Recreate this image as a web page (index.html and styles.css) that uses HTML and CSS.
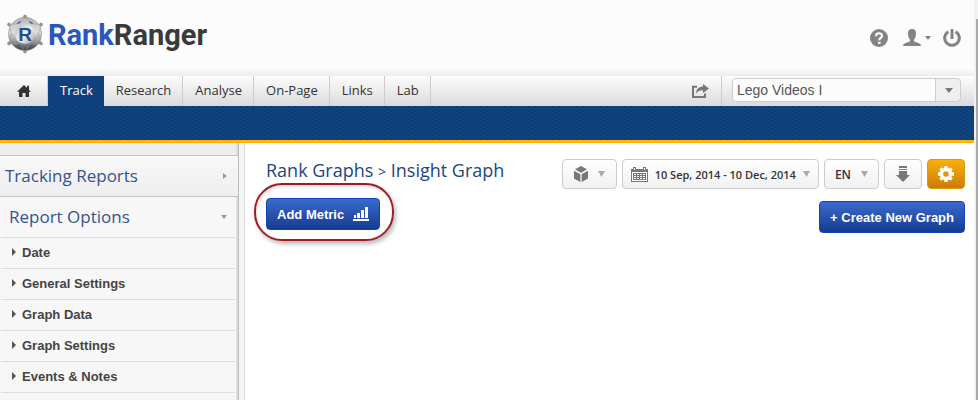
FILE: index.html
```html
<!DOCTYPE html>
<html lang="en">
<head>
<meta charset="utf-8">
<title>RankRanger - Insight Graph</title>
<link rel="stylesheet" href="styles.css">
</head>
<body>
<div class="page">
  <header class="header">
    <a class="logo" href="#">
      <svg class="badge" viewBox="0 0 36 40" aria-hidden="true">
        <defs>
          <linearGradient id="metal" x1="0" y1="0" x2="0" y2="1">
            <stop offset="0" stop-color="#b4b4b4"/>
            <stop offset=".45" stop-color="#dedede"/>
            <stop offset=".7" stop-color="#999"/>
            <stop offset="1" stop-color="#3a3a3a"/>
          </linearGradient>
          <linearGradient id="plate" x1="0" y1="0" x2="1" y2="1">
            <stop offset="0" stop-color="#b4b4b4"/>
            <stop offset=".5" stop-color="#f2f2f2"/>
            <stop offset="1" stop-color="#a0a0a0"/>
          </linearGradient>
        </defs>
        <circle cx="18" cy="20" r="16.500" fill="url(#metal)" stroke="#888" stroke-width=".6"/>
        <circle cx="18" cy="20" r="13.500" fill="#234f91"/>
        <path d="M18 2 23.500 9.500 34 10.500 31.500 20 34 29.500 23.500 30.500 18 38 12.500 30.500 2 29.500 4.500 20 2 10.500 12.500 9.500Z" fill="url(#metal)" stroke="#999" stroke-width=".5"/>
        <g fill="#999" stroke="#777" stroke-width=".5">
          <circle cx="18" cy="2.500" r="1.500"/><circle cx="34" cy="10.500" r="1.500"/><circle cx="34" cy="29.500" r="1.500"/>
          <circle cx="18" cy="37.500" r="1.500"/><circle cx="2" cy="29.500" r="1.500"/><circle cx="2" cy="10.500" r="1.500"/>
        </g>
        <circle cx="18" cy="20" r="10" fill="url(#plate)"/>
        <text class="badge-letter" x="18" y="27" text-anchor="middle">R</text>
      </svg>
      <span class="wordmark"><span class="rank">Rank</span>Ranger</span>
    </a>
    <div class="tools">
      <button class="tool" aria-label="Help">
        <svg width="18" height="18" viewBox="0 0 18 18"><circle cx="9" cy="9" r="9" fill="#848484"/><path d="M6 7.200C6 3.300 12 3.400 12 6.900 12 8.900 9.200 8.900 9.200 11.200" fill="none" stroke="#fff" stroke-width="2.200"/><path d="M8 12.700h2.500v2.300H8z" fill="#fff"/></svg>
      </button>
      <button class="tool account" aria-label="Account">
        <svg width="18" height="18" viewBox="0 0 18 18"><path d="M9 0c3 0 4.300 2.200 4 5-.2 2.800-1 4.600-2 5.600v1.600c2 1.200 7 1.600 7 4.800H0c0-3.200 5-3.600 7-4.800v-1.600C6 9.600 5.200 7.800 5 5 4.700 2.200 6 0 9 0Z" fill="#848484"/></svg>
        <svg width="6" height="4" viewBox="0 0 6 4"><path d="M0 0h6L3 4Z" fill="#848484"/></svg>
      </button>
      <button class="tool" aria-label="Log out">
        <svg width="18" height="18" viewBox="0 0 18 18"><path d="M5.300 2.700A7.300 7.300 0 1 0 12.700 2.700" fill="none" stroke="#848484" stroke-width="3"/><path d="M7.500 0h3v10h-3z" fill="#848484"/></svg>
      </button>
    </div>
  </header>

  <nav class="nav">
    <a class="tab home" href="#" aria-label="Home">
      <svg width="14" height="12" viewBox="0 0 14 12"><path d="M7 0 14 6.800H12V12H8.500V8h-3v4H2V6.800H0Z" fill="#333"/><path d="M10 .8h2V5h-2z" fill="#333"/></svg>
    </a>
    <a class="tab active" href="#">Track</a>
    <a class="tab" href="#">Research</a>
    <a class="tab" href="#">Analyse</a>
    <a class="tab" href="#">On-Page</a>
    <a class="tab" href="#">Links</a>
    <a class="tab" href="#">Lab</a>
    <button class="share" aria-label="Share">
      <svg width="17" height="14" viewBox="0 0 17 14"><path d="M5 2.800H1v10.200h12V9.500" fill="none" stroke="#777" stroke-width="2"/><path d="M11 0 17 4.500 11 9V6.400C8 6.200 6 7 4 9.800 4 5.500 7 2.700 11 2.600Z" fill="#777"/></svg>
    </button>
    <div class="campaign">
      <select class="campaign-select" aria-label="Campaign"><option>Lego Videos I</option></select>
      <svg class="campaign-arrow" width="8" height="5" viewBox="0 0 8 5"><path d="M0 0h8L4 5Z" fill="#777"/></svg>
    </div>
  </nav>
  <div class="band"></div>

  <div class="body">
    <aside class="sidebar">
      <button class="section closed">Tracking Reports
        <svg width="4" height="6" viewBox="0 0 4 6"><path d="M0 0 4 3 0 6Z" fill="#999"/></svg>
      </button>
      <button class="section open">Report Options
        <svg width="6" height="4" viewBox="0 0 6 4"><path d="M0 0h6L3 4Z" fill="#999"/></svg>
      </button>
      <ul class="options">
        <li><a href="#">Date</a></li>
        <li><a href="#">General Settings</a></li>
        <li><a href="#">Graph Data</a></li>
        <li><a href="#">Graph Settings</a></li>
        <li><a href="#">Events &amp; Notes</a></li>
      </ul>
    </aside>
    <div class="gutter"></div>
    <main class="main">
      <div class="row">
        <h1>Rank Graphs <span class="crumb">&gt;</span> Insight Graph</h1>
        <div class="controls">
          <button class="control" aria-label="View">
            <svg width="14" height="16" viewBox="0 0 14 16" fill="#777"><path d="M7 0 13 3.300 7 6.800 1 3.300Z"/><path d="M0 4.700 6.300 8.300V16L0 12.400Z"/><path d="M14 4.700 7.700 8.300V16L14 12.400Z"/></svg>
            <svg class="caret" width="7" height="6" viewBox="0 0 7 6"><path d="M0 0h7L3.500 6Z"/></svg>
          </button>
          <button class="control dates">
            <svg width="17" height="15" viewBox="0 0 17 15"><path d="M0 2h17v13H0z" fill="#777"/><path d="M1 5h15v9H1z" fill="#fff"/><path d="M2 0h3v4H2zM12 0h3v4h-3z" fill="#777"/><path d="M3 1h1v2H3zM13 1h1v2h-1z" fill="#fff"/><path d="M2 6h13v7H2z" fill="#777"/><path d="M3 7h2v1H3zm3 0h2v1H6zm3 0h2v1H9zm3 0h2v1h-2zM3 9h2v1H3zm3 0h2v1H6zm3 0h2v1H9zm3 0h2v1h-2zM3 11h2v1H3zm3 0h2v1H6zm3 0h2v1H9zm3 0h2v1h-2z" fill="#fff"/></svg>
            <span>10 Sep, 2014 - 10 Dec, 2014</span>
            <svg class="caret" width="7" height="6" viewBox="0 0 7 6"><path d="M0 0h7L3.500 6Z"/></svg>
          </button>
          <button class="control language">
            <span>EN</span>
            <svg class="caret" width="7" height="6" viewBox="0 0 7 6"><path d="M0 0h7L3.500 6Z"/></svg>
          </button>
          <button class="control square" aria-label="Download">
            <svg width="14" height="16" viewBox="0 0 14 16" fill="#777"><path d="M3 0h8v2H3zM3 3h8v1H3zM3 5h8v4h3l-7 7-7-7h3z"/></svg>
          </button>
          <button class="control square settings" aria-label="Settings">
            <svg width="16" height="16" viewBox="0 0 16 16"><circle cx="8" cy="8" r="4.500" fill="none" stroke="#fff" stroke-width="3.400"/><g stroke="#fff" stroke-width="3.400"><path d="M8 0v3M8 13v3M0 8h3M13 8h3M2.400 2.400l2 2M11.600 11.600l2 2M2.400 13.600l2-2M11.600 4.400l2-2"/></g></svg>
          </button>
        </div>
      </div>
      <div class="row actions">
        <div class="spot">
          <button class="primary add">Add Metric
            <svg width="16" height="14" viewBox="0 0 16 14" fill="#fff"><path d="M0 12h16v2H0zM1 8h2v3H1zM4 6h3v5H4zM8 3h3v8H8zM12 0h3v11h-3z"/></svg>
          </button>
        </div>
        <button class="primary">+ Create New Graph</button>
      </div>
    </main>
  </div>
</div>
</body>
</html>
```
FILE: styles.css
```css
* { box-sizing: border-box; }
html { height: 100%; }
body {
  margin: 0;
  min-height: 100%;
  display: flex;
  background: #f1f1f1;
  font-family: "Open Sans", sans-serif;
  color: #333;
}
button {
  margin: 0;
  padding: 0;
  border: 0;
  background: none;
  font: inherit;
  color: inherit;
  cursor: pointer;
}
a { color: inherit; text-decoration: none; }
svg { display: block; flex: none; }

.page {
  flex: 1;
  min-width: 0;
  min-height: 100vh;
  margin-right: 4px;
  display: flex;
  flex-direction: column;
  background: #fff;
  box-shadow: 2px 0 0 #f1f1f1, 4px 19px 0 #aaa;
}

.header {
  height: 76px;
  display: flex;
  justify-content: space-between;
  padding: 14px 13px 0 7px;
  background: linear-gradient(#fcfcfc 68px, #ececec);
}
.logo { display: flex; height: 40px; gap: 5px; }
.badge { width: 36px; height: 40px; }
.badge-letter { font: bold 19px "Liberation Sans", sans-serif; fill: #234f91; }
.wordmark { font: bold 29px/42px Roboto, sans-serif; color: #3a3a3a; }
.rank { color: #2858bd; }
.tools { display: flex; align-items: center; gap: 15px; height: 48px; }
.account { display: flex; align-items: center; gap: 4px; margin-right: -3px; }

.nav {
  display: flex;
  height: 30px;
  background: linear-gradient(#fdfdfd, #dadada);
  font-size: 13px;
  line-height: 29px;
}
.tab { padding: 0 11px 0 12px; border-right: 1px solid #ccc; }
.home { width: 48px; display: grid; place-items: center; }
.active {
  color: #fff;
  border-right: 0;
  background: #10407e;
}
.share {
  margin-left: auto;
  padding: 0 12px;
  border-right: 1px solid #ccc;
}
.campaign { position: relative; width: 229px; margin: 2px 13px 4px 10px; }
.campaign-select {
  display: block;
  width: 100%;
  height: 24px;
  padding: 0 28px 0 4px;
  appearance: none;
  border: 1px solid #ccc;
  border-radius: 4px;
  background: linear-gradient(90deg, #ccc 1px, #efefef 1px) right / 25px 100% no-repeat #fcfcfc;
  font: 14px "Liberation Sans", sans-serif;
  color: #555;
}
.campaign-arrow { position: absolute; right: 8px; top: 10px; pointer-events: none; }

.band {
  height: 37px;
  border-bottom: 3px solid #ffb60a;
  background:
    radial-gradient(circle at 1px 1px, #0e3c78 1px, transparent 1px) 0 0 / 6px 4px,
    radial-gradient(circle at 1px 1px, #0e3c78 1px, transparent 1px) 3px 2px / 6px 4px,
    #11437f;
}

.body { flex: 1; display: flex; }
.sidebar {
  width: 239px;
  padding-top: 12px;
  border-right: 1px solid #bbb;
  background: linear-gradient(#eee 12px, #f7f7f7 12px);
  box-shadow: inset -2px 0 1px #ddd;
}
.section {
  width: 100%;
  display: flex;
  align-items: center;
  justify-content: space-between;
  height: 41px;
  padding: 0 11px 1px 5px;
  border-top: 1px solid #c4c4c4;
  font-size: 17px;
  color: #35538f;
}
.closed { background: linear-gradient(#f8f8f8, #eee); }
.open { padding-left: 9px; }
.options { list-style: none; margin: 0 3px 0 1px; padding: 0; border-top: 1px solid #ddd; }
.options a {
  display: flex;
  align-items: center;
  gap: 6px;
  height: 31px;
  padding: 0 0 2px 11px;
  border-bottom: 1px solid #ddd;
  font: bold 13px "Liberation Sans", sans-serif;
  color: #444;
}
.options a::before {
  content: "";
  border: solid transparent;
  border-width: 4px 0 4px 4px;
  border-left-color: #555;
}
.gutter { width: 6px; background: #f5f5f5; border-right: 1px solid #ddd; }

.main { flex: 1; padding: 16px 9px 0 21px; }
.row { display: flex; justify-content: space-between; align-items: flex-start; }
h1 { margin: 0; font-size: 18px; line-height: 23px; font-weight: normal; color: #234580; }
.crumb { font-size: 14px; }
.controls { display: flex; gap: 5px; }
.control {
  display: flex;
  align-items: center;
  justify-content: center;
  gap: 10px;
  height: 30px;
  padding: 0 11px;
  border: 1px solid #ccc;
  border-radius: 4px;
  background: linear-gradient(#fff, #f1f1f1);
  font-size: 12px;
  font-weight: 600;
}
.caret { fill: #aaa; }
.dates { font-size: 11px; gap: 7px; padding: 0 8px; }
.language { padding: 0 10px; }
.square { width: 38px; padding: 0; }
.settings { border-color: #dc9a0c; background: linear-gradient(#f8b00c, #cc7c08); }

.actions { margin-top: 9px; }
.primary {
  display: flex;
  align-items: center;
  gap: 9px;
  height: 32px;
  margin-top: 3px;
  padding: 0 10px;
  border: 1px solid #0d45bd;
  border-radius: 4px;
  background: linear-gradient(#3c69cc, #143c90);
  font: bold 13px "Liberation Sans", sans-serif;
  color: #fff;
}
.add { margin-top: 0; }
.spot { position: relative; }
.spot::after {
  content: "";
  position: absolute;
  inset: -15px -14px -11px -12px;
  border: 2px solid #a01c24;
  border-radius: 28px;
  box-shadow: 2px 3px 4px #bbb, inset 1px 2px 3px #ddd;
  pointer-events: none;
}
```
